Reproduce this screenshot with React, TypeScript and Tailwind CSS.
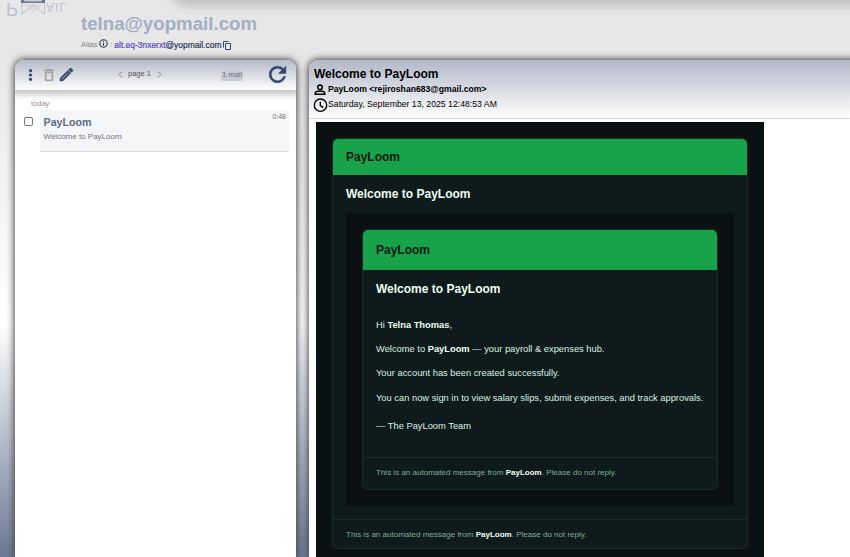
import React from 'react';

const card = 'overflow-hidden rounded-[6px] border border-[#163029] bg-[#0f1a1c]';

function Footer({ className }: { className: string }) {
  return (
    <div className={`border-t border-[#163029] pl-[13px] text-[8.02px] whitespace-nowrap text-[#80ab98] ${className}`}>
      This is an automated message from <b className="text-[#f0fff5]">PayLoom</b>. Please do not reply.
    </div>
  );
}

function Toolbar() {
  return (
    <div className="flex h-[30px] shrink-0 items-center bg-linear-to-b from-[#b5bac9] to-white text-[#36456b] shadow-[0_2px_6px_3px_#c9c9c9]">
      <svg className="ml-[13px] h-[12px] w-[5px]" viewBox="0 0 5 12" fill="currentColor">
        <circle cx="2.5" cy="1.7" r="1.6" /><circle cx="2.5" cy="6" r="1.6" /><circle cx="2.5" cy="10.3" r="1.6" />
      </svg>
      <svg className="ml-[7.5px] h-[16px] w-[16px] text-[#a3a3a5]" viewBox="0 0 24 24" fill="currentColor">
        <path d="M6 19c0 1.1.9 2 2 2h8c1.1 0 2-.9 2-2V7H6v12zM8 9h8v10H8V9zm7.500-5-1-1h-5l-1 1H5v2h14V4z" stroke="currentColor" strokeWidth=".6" />
      </svg>
      <svg className="-mt-px ml-px h-[17px] w-[17px]" viewBox="0 0 24 24" fill="currentColor">
        <path d="m14.060 9.020.92.92L5.920 19H5v-.92l9.060-9.060M17.660 3c-.25 0-.51.1-.7.290l-1.830 1.830 3.750 3.750 1.830-1.830c.39-.39.39-1.020 0-1.410l-2.340-2.340c-.2-.2-.45-.29-.71-.29zm-3.600 3.190L3 17.250V21h3.750L17.810 9.940l-3.750-3.750z" stroke="currentColor" strokeWidth="1" />
      </svg>
      <svg className="-mt-px ml-[43.500px] h-[7px] w-[5px]" viewBox="0 0 5 7" fill="none" stroke="#85868a"><path d="M4 .5 1 3.500l3 3" /></svg>
      <span className="-mt-[3px] ml-[5px] text-[7.500px] leading-none text-[#555]">page 1</span>
      <svg className="-mt-px ml-[6px] h-[7px] w-[5px]" viewBox="0 0 5 7" fill="none" stroke="#85868a"><path d="m1 .5 3 3-3 3" /></svg>
      <span className="ml-[59px] flex h-[11px] w-[22px] items-center justify-center rounded-[3px] bg-[#c6cad3] text-[7.500px] whitespace-nowrap text-[#707480]">1 mail</span>
      <svg className="-mt-px ml-[22px] h-[25px] w-[25px] shrink-0" viewBox="0 0 24 24" fill="currentColor">
        <path d="M17.650 6.350A7.950 7.950 0 0 0 12 4a8 8 0 1 0 7.730 10h-2.080A6 6 0 1 1 12 6c1.660 0 3.140.69 4.220 1.780L13 11h7V4l-2.350 2.350z" stroke="currentColor" strokeWidth=".5" />
      </svg>
    </div>
  );
}

function Inbox() {
  return (
    <aside className="ml-[15px] flex w-[281px] shrink-0 flex-col overflow-hidden rounded-t-[9px] bg-white shadow-[0_0_7px_1px_#444]">
      <Toolbar />
      <div className="mt-[8px] ml-[16px] h-[12px] text-[7.500px] leading-[12px] text-[#9a8e8b]">today</div>
      <div className="flex h-[42px]">
        <div className="mt-[7px] ml-[9px] h-[9px] w-[9px] rounded-[2px] border border-[#777] bg-white" />
        <div className="ml-[7px] flex w-[249px] justify-between border-b border-[#dfe0e2] bg-[#f4f5f7] pr-[3px] pl-[3.500px]">
          <div>
            <div className="mt-[5px] text-[10.700px] leading-[14px] font-bold text-[#5b6b8b]">PayLoom</div>
            <div className="mt-[3px] text-[8px] leading-[10px] text-[#77747b]">Welcome to PayLoom</div>
          </div>
          <div className="mt-[2px] text-[7px] leading-[9px] text-[#77747b]">0:48</div>
        </div>
      </div>
    </aside>
  );
}

function InnerMessage() {
  return (
    <div className="mx-[13px] h-[293px] bg-[#0b1013] px-[16px] pt-[16px]">
      <div className={`${card} h-[261px]`}>
        <div className="h-[40px] bg-[#18a34a] pl-[13px] text-[12px] leading-[40px] font-bold text-[#0c1914]">PayLoom</div>
        <div className="h-[187px] pl-[13px] text-[9.340px] leading-[12px] whitespace-nowrap text-[#d5f3e0]">
          <h3 className="pt-[10px] text-[12px] leading-[18px] font-bold text-[#eafff0]">Welcome to PayLoom</h3>
          <p className="mt-[21px]">Hi <b className="text-[#eafff0]">Telna Thomas</b>,</p>
          <p className="mt-[12px]">Welcome to <b className="text-[#eafff0]">PayLoom</b> — your payroll &amp; expenses hub.</p>
          <p className="mt-[12px]">Your account has been created successfully.</p>
          <p className="mt-[13px]">You can now sign in to view salary slips, submit expenses, and track approvals.</p>
          <p className="mt-[16px]">— The PayLoom Team</p>
        </div>
        <Footer className="h-[32px] leading-[29px]" />
      </div>
    </div>
  );
}

function Reader() {
  return (
    <main className="-mr-[15px] ml-[13px] flex-1 overflow-hidden rounded-tl-[9px] bg-white shadow-[0_0_7px_1px_#444]">
      <header className="h-[59px] border-b border-[#d8d8d8] bg-linear-to-b from-[#b3b8c7] to-white pl-[5px] text-black">
        <h1 className="pt-[6px] text-[12px] leading-[16px] font-bold">Welcome to PayLoom</h1>
        <div className="flex h-[15px] items-center text-[8.640px] font-bold">
          <svg className="mr-[2px] h-[12px] w-[12px]" viewBox="0 0 12 12" fill="none" stroke="currentColor" strokeWidth="1.500">
            <circle cx="6" cy="3.200" r="2.300" /><path d="M1.200 10.300v-1C1.200 7.800 4 7 6 7s4.800.8 4.800 2.300v1Z" />
          </svg>
          PayLoom &lt;rejiroshan683@gmail.com&gt;
        </div>
        <div className="-ml-px flex h-[16px] items-center text-[8.700px]">
          <svg className="h-[15px] w-[15px]" viewBox="0 0 15 15" fill="none" stroke="currentColor" strokeWidth="1.400">
            <circle cx="7.500" cy="7.200" r="6.200" /><path d="M7.300 3.700v4l3 1.900" />
          </svg>
          Saturday, September 13, 2025 12:48:53 AM
        </div>
      </header>
      <div className="mt-[3px] ml-[7px] h-[435px] w-[448px] bg-[#0b1013] px-[16px] pt-[16px]">
        <div className={`${card} h-[411px]`}>
          <div className="h-[36px] bg-[#18a34a] pl-[13px] text-[12px] leading-[36px] font-bold text-[#0c1914]">PayLoom</div>
          <h2 className="h-[38px] pl-[13px] text-[12px] leading-[38px] font-bold text-[#eafff0]">Welcome to PayLoom</h2>
          <InnerMessage />
          <Footer className="mt-[13px] h-[30px] leading-[29px]" />
        </div>
      </div>
    </main>
  );
}

function Logo() {
  return (
    <div className="flex h-[22px] w-[74px] shrink-0 items-start text-[#a4aaba] opacity-60">
      <span className="ml-[6px] w-[15px] -scale-y-100 text-[18px] leading-[18px]">P</span>
      <svg className="h-[16px] w-[25px]" viewBox="0 0 25 16" fill="none" stroke="currentColor">
        <path d="M1 3v12M23.500 3v11M1 14 12 5l11 9" />
        <path d="M1 4h22L12 13Z" fill="currentColor" fillOpacity=".25" stroke="none" />
        <path d="M0 0h24v3H0Z" fill="#1c2c59" stroke="none" />
        <path d="M3 0h18v1.500H3Z" fill="#a8c2bf" stroke="none" />
      </svg>
      <span className="-scale-y-100 text-[12px] leading-[14px] tracking-[1px]">AIL</span>
    </div>
  );
}

function Banner() {
  return (
    <div className="flex h-[60px] shrink-0 overflow-hidden">
      <Logo />
      <div className="ml-[7px] flex w-[180px] shrink-0 flex-col pt-[12px] whitespace-nowrap">
        <div className="text-[18.700px] leading-[24px] font-bold text-[#a5aec4]">telna@yopmail.com</div>
        <div className="mt-[3px] flex h-[12px] items-center text-[7.500px] text-[#858589]">
          Alias
          <svg className="mx-[2px] -mt-[3px] h-[9px] w-[9px]" viewBox="0 0 8 8" fill="none" stroke="#333c50"><circle cx="4" cy="4" r="3.300" /><path d="M4 3.500V6M4 1.800v1" /></svg>
          :
          <span className="ml-[2px] text-[8.450px] text-[#5948c8] [-webkit-text-stroke:0.2px]">alt.eq-3nxerxt</span>
          <span className="text-[8.450px] text-[#29395e] [-webkit-text-stroke:0.2px]">@yopmail.com</span>
          <svg className="ml-[2px] h-[9px] w-[8px]" viewBox="0 0 8 9" fill="none" stroke="#36456b"><path d="M.5 6.500v-6h5M2.500 2.500h5v6h-5Z" /></svg>
        </div>
      </div>
      <div className="-mt-[8px] -mr-[20px] -ml-[84px] h-[8px] flex-1 rounded-bl-[9px] bg-[#ccc] shadow-[0_3px_9px_4px_#c4c4c4]" />
    </div>
  );
}

export default function App() {
  return (
    <div className="flex h-[557px] w-[850px] flex-col overflow-hidden bg-linear-[180deg,#e7e7e7_0px,#e7e7e7_60px,#fff_325px,#6c7894_557px] font-['Liberation_Sans',Arial,sans-serif]">
      <Banner />
      <div className="flex flex-1">
        <Inbox />
        <Reader />
      </div>
    </div>
  );
}
